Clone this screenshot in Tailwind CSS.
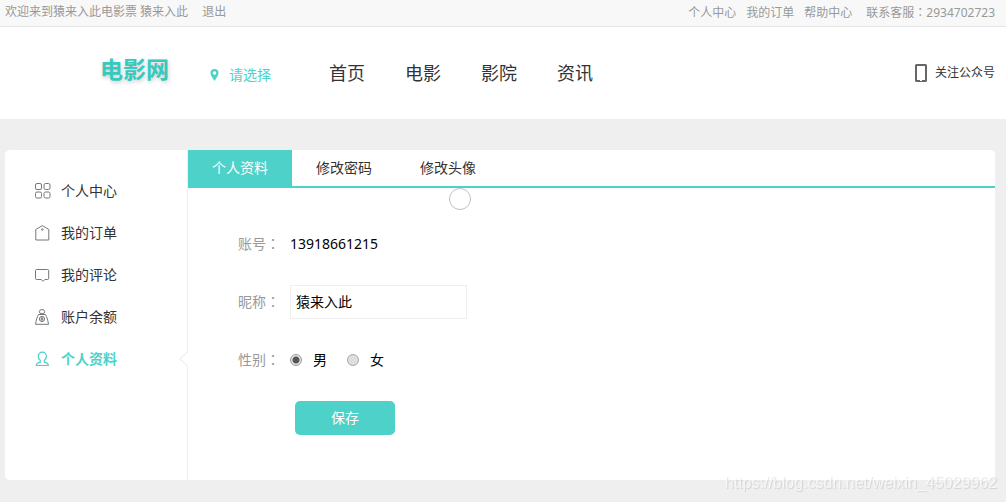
<!DOCTYPE html>
<html lang="zh-CN">
<head>
<meta charset="utf-8">
<meta name="viewport" content="width=device-width, initial-scale=1">
<title>个人资料</title>
<script src="https://cdn.jsdelivr.net/npm/@tailwindcss/browser@4"></script>
</head>
<body class="min-h-screen bg-[#efefef] font-['Noto_Sans','Noto_Sans_CJK_SC',sans-serif] text-sm text-[#333]">

<!-- Top bar -->
<div class="flex h-[27px] items-center justify-between border-b border-[#e5e5e5] bg-[#f8f8f8] pr-[11px] pb-[2px] pl-[5px] text-xs text-[#999]">
  <div class="flex gap-[14px]">
    <span>欢迎来到猿来入此电影票 猿来入此</span>
    <a href="#">退出</a>
  </div>
  <div class="flex items-baseline gap-[10px]">
    <a href="#">个人中心</a>
    <a href="#">我的订单</a>
    <a href="#">帮助中心</a>
    <span class="pl-1">联系客服<span class="font-['Noto_Sans_CJK_TC']" lang="zh-TW">：</span>2934702723</span>
  </div>
</div>

<!-- Header -->
<header class="flex h-[92px] items-center bg-white pr-[11px] pl-[100px]">
  <a href="#" class="w-[110px] pb-2 text-[23px] leading-8 font-bold text-[#36c9be] [text-shadow:1px_2px_4px_rgba(0,0,0,0.2)]">电影网</a>
  <button type="button" class="flex w-[119px] items-center gap-[10px] pt-[3px] text-sm text-[#4dd1c8]">
    <svg class="h-3 w-[9px]" viewBox="0 0 9 12" fill="currentColor" aria-hidden="true"><path fill-rule="evenodd" d="M4.500 0A4 4 0 0 0 .5 4C.5 6.500 3 9.500 4.500 12 6 9.500 8.500 6.500 8.500 4A4 4 0 0 0 4.500 0ZM4.500 2.200A1.800 1.800 0 1 1 4.500 5.800 1.800 1.800 0 0 1 4.500 2.200Z"/></svg>
    请选择
  </button>
  <nav class="flex gap-10 text-lg">
    <a href="#">首页</a>
    <a href="#">电影</a>
    <a href="#">影院</a>
    <a href="#">资讯</a>
  </nav>
  <a href="#" class="ml-auto flex items-center gap-2 text-xs">
    <svg class="h-[18px] w-3" viewBox="0 0 12 18" fill="#666" aria-hidden="true"><path fill-rule="evenodd" d="M1.500 0h9A1.500 1.500 0 0 1 12 1.500v15a1.500 1.500 0 0 1-1.500 1.500h-9A1.500 1.500 0 0 1 0 16.500v-15A1.500 1.500 0 0 1 1.500 0ZM2 2v14h8V2ZM5 16v1h2v-1Z"/></svg>
    关注公众号
  </a>
</header>

<!-- Account panel -->
<main class="mt-[31px] mr-[11px] ml-[5px] flex min-h-[330px] overflow-hidden rounded-[5px] bg-white">
  <aside class="relative w-[183px] shrink-0 border-r border-[#efefef] pt-5">
    <nav>
      <a href="#" class="flex h-[42px] items-center gap-[10px] pl-[30px]">
        <svg class="size-4" viewBox="0 0 16 16" fill="none" stroke="#777" aria-hidden="true"><rect x=".5" y=".5" width="6" height="6" rx="1.500"/><rect x="9" y=".5" width="6" height="6" rx="1.500"/><rect x=".5" y="9" width="6" height="6" rx="1.500"/><rect x="9" y="9" width="6" height="6" rx="1.500"/></svg>
        个人中心</a>
      <a href="#" class="flex h-[42px] items-center gap-[10px] pl-[30px]">
        <svg class="size-4" viewBox="0 0 16 16" fill="none" stroke="#777" aria-hidden="true"><path d="M.8 15V4.500L7.300.6l6.500 3.900V15Z"/><circle cx="7.300" cy="4.500" r=".8"/></svg>
        我的订单</a>
      <a href="#" class="flex h-[42px] items-center gap-[10px] pl-[30px]">
        <svg class="size-4" viewBox="0 0 16 16" fill="none" stroke="#777" aria-hidden="true"><path d="M1.700 2.500H12.500a1.200 1.200 0 0 1 1.200 1.200v7.600a1.200 1.200 0 0 1-1.200 1.200H9.800L8 14.300 6.200 12.500H1.700a1.200 1.200 0 0 1-1.200-1.200V3.700a1.200 1.200 0 0 1 1.200-1.200Z"/></svg>
        我的评论</a>
      <a href="#" class="flex h-[42px] items-center gap-[10px] pl-[30px]">
        <svg class="size-4" viewBox="0 0 16 16" fill="none" stroke="#777" aria-hidden="true"><ellipse cx="7" cy="2.700" rx="2.700" ry="2.100"/><path d="M3.600 5.500h6.800C12 8 13 11.500 13.500 15.300H.6C1 11.500 2 8 3.600 5.500Z"/><circle cx="7" cy="10" r="2.600"/><path d="M7 8v4M5.700 9.300h2.600M5.700 10.700h2.600" stroke-width=".9"/></svg>
        账户余额</a>
      <a href="#" class="flex h-[42px] items-center gap-[10px] pl-[30px] font-bold text-[#4dd1c8]" aria-current="page">
        <svg class="size-4" viewBox="0 0 16 16" fill="none" stroke="currentColor" stroke-width="1.200" aria-hidden="true"><path d="M5.300 9.500C3.500 8.300 3.200 6.500 3.200 5.200a4.100 4.100 0 0 1 8.200 0c0 1.300-.3 3.100-2.100 4.300v1.700c2 .4 3.800 1.200 4.100 3.300H1.200c.3-2.100 2.100-2.900 4.100-3.300Z"/></svg>
        个人资料</a>
    </nav>
    <svg class="absolute top-[201px] right-[-1px] h-4 w-[9px]" viewBox="0 0 9 16" fill="#fff" stroke="#e8e8e8" aria-hidden="true"><path stroke="none" d="M9 1v14L1 8Z"/><path d="M8.500 1 .8 8l7.700 7"/></svg>
  </aside>

  <section class="min-w-0 flex-1">
    <div class="relative flex h-[38px] bg-[linear-gradient(to_top,#4dd1c8_2px,#fff_2px)]">
      <a href="#" class="flex items-center bg-[#4dd1c8] px-6 pb-[2px] text-white" aria-current="page">个人资料</a>
      <a href="#" class="flex items-center px-6 pb-[2px]">修改密码</a>
      <a href="#" class="flex items-center px-6 pb-[2px]">修改头像</a>
      <!-- Click ripple -->
      <span class="absolute top-[38px] left-[261px] size-[22px] rounded-full border border-[#c0bfcc]"></span>
    </div>

    <form class="pt-10 pl-[50px] text-black">
      <div class="flex h-8 items-center gap-[10px]">
        <span class="w-[42px] pb-[2px] text-[#999]">账号<span class="font-['Noto_Sans_CJK_TC']" lang="zh-TW">：</span></span>
        <span>13918661215</span>
      </div>
      <div class="mt-[25px] flex items-center gap-[10px]">
        <label for="nickname" class="w-[42px] pb-[2px] text-[#999]">昵称<span class="font-['Noto_Sans_CJK_TC']" lang="zh-TW">：</span></label>
        <input id="nickname" type="text" value="猿来入此" class="h-[34px] w-[177px] border border-[#efefef] px-[5px] pb-[2px] outline-none">
      </div>
      <fieldset class="mt-[25px] flex h-8 items-center">
        <legend class="float-left mr-[10px] w-[42px] pb-[2px] text-[#999]">性别<span class="font-['Noto_Sans_CJK_TC']" lang="zh-TW">：</span></legend>
        <label class="mr-5 flex items-center gap-[11px]">
          <input type="radio" name="gender" checked class="size-3 appearance-none rounded-full border border-[#999] bg-[#e4e4e4] checked:bg-[radial-gradient(circle,#555_0_3px,#e4e4e4_4px)]">男</label>
        <label class="flex items-center gap-[11px]">
          <input type="radio" name="gender" class="size-3 appearance-none rounded-full border border-[#aaa] bg-[#dedede] checked:bg-[radial-gradient(circle,#555_0_3px,#e4e4e4_4px)]">女</label>
      </fieldset>
      <button type="submit" class="mt-[25px] ml-[57px] h-[34px] w-[100px] rounded-[5px] bg-[#4dd1c8] text-white">保存</button>
    </form>
  </section>
</main>

<span class="fixed right-[9px] bottom-[7px] font-['Liberation_Sans',sans-serif] text-base leading-6 text-white/60 [text-shadow:1px_1px_1px_rgba(0,0,0,0.12)]">https://blog.csdn.net/weixin_45029962</span>
</body>
</html>
